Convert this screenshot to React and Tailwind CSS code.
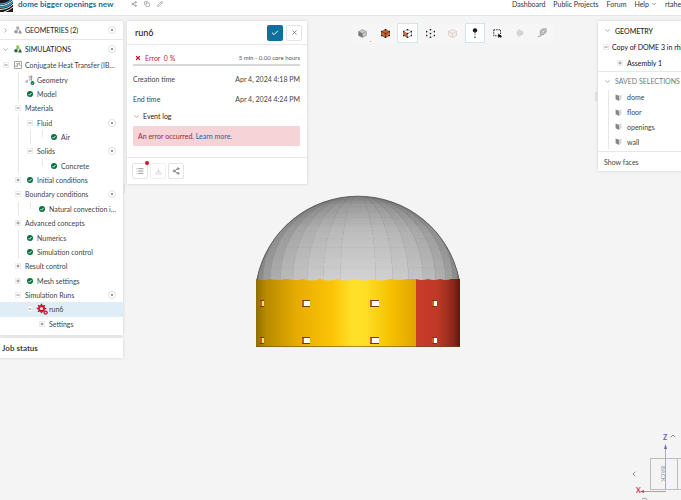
import React from "react";
import {
  Check, X, ChevronDown, ChevronRight, ChevronLeft, ChevronUp, Share2, Copy, Pencil,
  List, Download,
} from "lucide-react";

const tree = [
  { lead: "", toggle: "-", icon: "study", label: "Conjugate Heat Transfer (IB…" },
  { lead: " |", icon: "geometry", label: "Geometry" },
  { lead: " |", icon: "ok", label: "Model" },
  { lead: " ", toggle: "-", label: "Materials" },
  { lead: " |", toggle: "-", label: "Fluid", add: true },
  { lead: " ||l", icon: "ok", label: "Air" },
  { lead: " |", toggle: "-", label: "Solids", add: true },
  { lead: " | l", icon: "ok", label: "Concrete" },
  { lead: " ", toggle: "+", icon: "ok", label: "Initial conditions" },
  { lead: " ", toggle: "-", label: "Boundary conditions", add: true },
  { lead: " |l", icon: "ok", label: "Natural convection i…" },
  { lead: " ", toggle: "+", label: "Advanced concepts" },
  { lead: " |", icon: "ok", label: "Numerics" },
  { lead: " |", icon: "ok", label: "Simulation control" },
  { lead: " ", toggle: "+", label: "Result control" },
  { lead: " ", toggle: "+", icon: "ok", label: "Mesh settings" },
  { lead: " ", toggle: "-", label: "Simulation Runs", add: true },
  { lead: "  ", toggle: "-", icon: "failed", label: "run6", selected: true },
  { lead: "   ", toggle: "+", label: "Settings" },
];

function Toggle({ kind, label }) {
  return (
    <span className="flex w-3 shrink-0 justify-center">
      <button
        type="button"
        aria-label={(kind === "+" ? "Expand " : "Collapse ") + label}
        className="flex size-[6px] items-center justify-center border border-[#ececec] bg-white"
      >
        <svg viewBox="0 0 6 6" className="size-[6px] shrink-0" stroke="#8a8a8a" strokeWidth="1">
          <path d={kind === "+" ? "M1.500 3H4.500M3 1.500V4.500" : "M1.500 3H4.500"} />
        </svg>
      </button>
    </span>
  );
}

function AddButton({ label }) {
  return (
    <button
      type="button"
      aria-label={"Add to " + label}
      className="ml-auto flex size-2 shrink-0 items-center justify-center rounded-full border border-[#e2e2e2] bg-white"
    >
      <svg viewBox="0 0 6 6" className="size-[6px] shrink-0" stroke="#777" strokeWidth="1">
        <path d="M2 3H4M3 2V4" />
      </svg>
    </button>
  );
}

function Shapes({ top, base, className }) {
  return (
    <svg viewBox="0 0 16 16" className={className}>
      <path d="M4 2 9 0 11 6 6 8Z" fill={top} />
      <circle cx="4" cy="11.5" r="3.6" fill={base} />
      <path d="M8 15 12 7 16 15Z" fill={base} />
      <path d="M5 6 7 9M9 6 11 9" stroke={base} />
    </svg>
  );
}

function gearPath(cx, cy, outer, inner, teeth) {
  const pts = [];
  for (let i = 0; i < teeth; i++) {
    [[-0.3, inner], [-0.18, outer], [0.18, outer], [0.3, inner]].forEach(([o, r]) => {
      const a = ((i + o) / teeth) * Math.PI * 2;
      pts.push((cx + r * Math.cos(a)).toFixed(2) + " " + (cy + r * Math.sin(a)).toFixed(2));
    });
  }
  return "M" + pts.join("L") + "Z";
}

function TreeIcon({ kind }) {
  if (kind === "ok")
    return (
      <svg viewBox="0 0 12 12" className="size-[6px]">
        <circle cx="6" cy="6" r="6" fill="#0b7040" />
        <path d="M3 6.2 5.2 8.4 9 4" stroke="#fff" strokeWidth="1.8" fill="none" />
      </svg>
    );
  if (kind === "failed")
    return (
      <svg viewBox="0 0 12 12" className="size-3 shrink-0">
        <path d={gearPath(5.5, 5.5, 4.8, 3.5, 8)} fill="#d0112b" />
        <circle cx="5.5" cy="5.5" r="1.6" fill="#e3f0f7" />
        <circle cx="9.6" cy="9.6" r="2.2" fill="#d0112b" />
        <circle cx="9.6" cy="9.6" r="0.9" fill="#e3f0f7" />
      </svg>
    );
  if (kind === "geometry")
    return (
      <svg viewBox="0 0 12 12" className="size-[10px]">
        <path d="M4 2 8 1V5L5 7M1 7 3 6V9H1Z" fill="#ccc" stroke="#aaa" strokeWidth="0.8" />
        <path d="M8 1V7" stroke="#888" />
        <circle cx="9" cy="9.5" r="2.4" fill="#0b7040" />
        <path d="M7.8 9.5 8.8 10.4 10.3 8.6" stroke="#fff" strokeWidth="0.7" fill="none" />
      </svg>
    );
  return (
    <svg viewBox="0 0 12 12" className="size-2" fill="none" stroke="#777">
      <rect x="1" y="1" width="10" height="10" />
      <path d="M3 9V6M5 9V4H8M8 2V6L10 8M3 4H4" />
    </svg>
  );
}

function TreeRow({ row }) {
  return (
    <li className={"flex items-center pr-[7px] " + (row.selected ? "bg-[#dfeef6]" : "")}>
      {row.lead.split("").map((c, i) => (
        <span key={i} className="flex h-full w-3 shrink-0 justify-center">
          {c !== " " && (
            <span className={"w-px bg-[#e6e6e6] " + (c === "l" ? "h-1/2" : "h-full")} />
          )}
        </span>
      ))}
      {row.toggle && <Toggle kind={row.toggle} label={row.label} />}
      {row.icon && (
        <span className="flex w-3 shrink-0 items-center justify-center">
          <TreeIcon kind={row.icon} />
        </span>
      )}
      <span className="ml-px whitespace-nowrap">{row.label}</span>
      {row.add && <AddButton label={row.label} />}
    </li>
  );
}

function SectionHead({ open, label, top, base }) {
  const Icon = open ? ChevronDown : ChevronRight;
  return (
    <div className="flex h-[18px] items-center pr-[7px]">
      <button type="button" className="flex items-center gap-[3px] pl-[2px] text-[#222]">
        <Icon className="size-[7px] text-[#777]" />
        <span className="flex items-center gap-[3px] pl-[2px]">
          <Shapes top={top} base={base} className="size-2" />
          {label}
        </span>
      </button>
      <AddButton label={label} />
    </div>
  );
}

function CubeIcon({ fill, edge, dots, half }) {
  return (
    <svg viewBox="0 0 16 16" className="size-[9px]">
      <path d="M8 1 15 4.5V11.5L8 15 1 11.5V4.5Z" fill={fill} />
      {half && <path d="M1 4.5 8 8V15L1 11.5Z" fill={half} />}
      <path
        d="M8 1 15 4.5V11.5L8 15 1 11.5V4.5ZM1 4.5 8 8 15 4.5M8 8V15"
        fill="none" stroke={edge} strokeWidth="1" strokeDasharray={dots === "only" ? "1 2" : undefined}
      />
      {dots &&
        [[8, 1], [15, 4.5], [15, 11.5], [8, 15], [1, 11.5], [1, 4.5], [8, 8]].map(([x, y]) => (
          <circle key={x + "-" + y} cx={x} cy={y} r="1.5" fill="#222" />
        ))}
    </svg>
  );
}

const tools = [
  { name: "Shaded", icon: (
    <span className="relative flex">
      <CubeIcon fill="#c8c8c8" edge="#8a8a8a" half="#777" />
      <span className="absolute -right-1 -bottom-1 size-px bg-[#e8a070]" />
    </span>
  ) },
  { name: "Shaded with edges", icon: <CubeIcon fill="#d9622b" edge="#5a2a17" dots="all" /> },
  { name: "Faces", active: true, icon: <CubeIcon fill="#fff" half="#d9622b" edge="#777" dots="all" /> },
  { name: "Vertices", icon: <CubeIcon fill="none" edge="#aaa" dots="only" /> },
  { name: "Volumes", icon: <CubeIcon fill="#f7efee" edge="#d3b5b0" /> },
  { name: "Pick", active: true, icon: (
    <svg viewBox="0 0 12 14" className="h-3 w-[10px]">
      <circle cx="6" cy="4" r="2.6" fill="#111" />
      <path d="M6 5V10" stroke="#777" />
      <circle cx="6" cy="12" r="0.9" fill="#111" />
    </svg>
  ) },
  { name: "Box select", icon: (
    <svg viewBox="0 0 12 12" className="size-[9px]">
      <rect x="1" y="1" width="9" height="8" fill="none" stroke="#222" strokeWidth="1.3" strokeDasharray="1.8 1.4" />
      <path d="M7 6V12L8.6 10.6 10.6 11.8 11.8 9.6Z" fill="#111" />
    </svg>
  ) },
  { name: "Hide", icon: (
    <svg viewBox="0 0 12 12" className="size-2" fill="#e2e2e2" stroke="#c4c4c4">
      <path d="M2 3 6 1V11L2 9ZM6 4 10 3V8L6 9M1 6H11" />
    </svg>
  ) },
  { name: "Measure", icon: (
    <svg viewBox="0 0 12 12" className="size-[10px]" fill="none" stroke="#999">
      <path d="M1 10H4L6 8M4 6V3L7 1H11V5L8 8H4Z" fill="#ccc" />
      <circle cx="7.5" cy="4.5" r="1.6" fill="#eee" />
    </svg>
  ) },
];

const CX = 102;
const BASE = 85;
const latitudes = [8, 15, 22, 29, 35, 41, 47, 53, 59, 65, 70, 75, 80];
const facets = Array.from({ length: 18 }, (_, i) => -90 + i * 10);
const openings = [
  { x: 4, w: 4, lit: "#f5e27a" },
  { x: 46, w: 8, lit: "#fff" },
  { x: 114, w: 9, lit: "#fff" },
  { x: 176, w: 5, lit: "#fff" },
];

function meridian(deg) {
  const s = Math.sin((deg * Math.PI) / 180);
  return { x: CX + 101 * s, rx: Math.abs(102 * s), sweep: s < 0 ? 1 : 0 };
}

function facetFill(deg) {
  const v = Math.round(92 + 120 * Math.pow(Math.max(0, Math.cos(((deg - 1) * Math.PI) / 180)), 0.65));
  return `rgb(${v},${v},${v})`;
}

function Building() {
  return (
    <svg viewBox="0 0 204 154" className="w-[204px]" role="img" aria-label="Dome model">
      <defs>
        <linearGradient id="wall" x1="0" x2="1">
          <stop offset="0" stopColor="#8f6d00" />
          <stop offset="0.06" stopColor="#b88a00" />
          <stop offset="0.25" stopColor="#e6ab00" />
          <stop offset="0.48" stopColor="#fcc408" />
          <stop offset="0.6" stopColor="#ffe02a" />
          <stop offset="0.68" stopColor="#ffdf26" />
          <stop offset="0.85" stopColor="#f5bf00" />
          <stop offset="1" stopColor="#e0a500" />
        </linearGradient>
        <linearGradient id="red" x1="0" x2="1">
          <stop offset="0" stopColor="#c93d2a" />
          <stop offset="0.5" stopColor="#bd3926" />
          <stop offset="0.85" stopColor="#8a2719" />
          <stop offset="1" stopColor="#5f170e" />
        </linearGradient>
        <linearGradient id="crown" x1="0" x2="0" y1="0" y2="1">
          <stop offset="0" stopColor="#000" stopOpacity="0.45" />
          <stop offset="0.12" stopColor="#000" stopOpacity="0.27" />
          <stop offset="0.4" stopColor="#000" stopOpacity="0.11" />
          <stop offset="1" stopColor="#000" stopOpacity="0" />
        </linearGradient>
        <clipPath id="dome"><path d="M1 88V85A103 103 0 0 1 203 85V88Z" /></clipPath>
      </defs>
      <g clipPath="url(#dome)">
        <rect width="204" height="90" fill="#666" />
        {facets.map((d) => {
          const a = meridian(d);
          const b = meridian(d + 10);
          const fill = facetFill(d + 5);
          return (
            <path
              key={d}
              d={`M${a.x} 88V${BASE}A${a.rx} 84 0 0 ${a.sweep} ${CX} 1A${b.rx} 84 0 0 ${1 - b.sweep} ${b.x} ${BASE}V88Z`}
              fill={fill}
              stroke={fill}
              strokeWidth="0.4"
            />
          );
        })}
        <rect width="204" height="90" fill="url(#crown)" />
        {latitudes.map((l) => {
          const y = BASE - 84 * Math.sin((l * Math.PI) / 180);
          return <path key={l} d={`M0 ${y}H204`} stroke="#777" strokeWidth="0.5" opacity="0.12" />;
        })}
      </g>
      <path d="M1 85A103 103 0 0 1 203 85" fill="none" stroke="#555" strokeWidth="0.8" />
      <path
        d="M0 85Q7 87 14 85Q22 87 30 85Q39 87 47 85Q56 88 64 85Q73 88 81 85Q90 88 99 85Q108 88 117 85Q126 88 134 85Q143 87 151 85L160 85V153H0Z"
        fill="url(#wall)"
      />
      <path d="M160 85Q166 87 172 85Q178 87 184 85Q190 87 195 85L204 85V153H160Z" fill="url(#red)" />
      <path d="M0 152.5H204" stroke="#6b4a10" strokeWidth="0.8" opacity="0.7" />
      {[107, 144].map((y) =>
        openings.map((w) => (
          <g key={w.x + "-" + y}>
            <rect x={w.x} y={y - 1} width={w.w} height="7" fill="#7a3a10" />
            <rect x={w.x} y={y} width="2" height="5" fill="#d0551c" />
            <rect x={w.x + 2} y={y} width={w.w - 2} height="5" fill={w.lit} />
          </g>
        ))
      )}
    </svg>
  );
}

function ViewCube() {
  return (
    <svg viewBox="0 0 52 70" className="h-[70px] w-[52px]" fill="none" role="img" aria-label="View cube">
      <rect x="21.5" y="28.5" width="27" height="31" stroke="#bcbcc2" />
      <path d="M48 28.5H52M48 59.5H52" stroke="#bcbcc2" />
      <path d="M36.5 59V17" stroke="#a9a4dc" />
      <path d="M35 19 36.5 14 38 19Z" fill="#6a61c0" />
      <path d="M37 61.5H14" stroke="#e08a98" />
      <path d="M15 60 11 61.500 15 63Z" fill="#cf3850" />
      <path d="M13 69Q17 67 18 70" stroke="#999" />
      <text x="34" y="10" fontSize="7" fontWeight="700" fill="#6a61c0" fontFamily="Lato, sans-serif">Z</text>
      <text x="7" y="63" fontSize="7" fontWeight="700" fill="#cf3850" fontFamily="Lato, sans-serif">X</text>
      <text transform="translate(32 36) rotate(90)" fontSize="6" fill="#9a98b4" fontFamily="Lato, sans-serif">BACK</text>
    </svg>
  );
}

function FaceIcon() {
  return (
    <svg viewBox="0 0 12 12" className="size-[7px]">
      <path d="M1 1 7 3V12L1 9Z" fill="#888" />
      <path d="M7 3 11 1V9L7 12Z" fill="#d4d4d4" />
    </svg>
  );
}

const card = "bg-white shadow-[0_0_3px_rgba(0,0,0,0.15)]";

export default function App() {
  return (
    <div className="relative flex min-h-screen flex-col overflow-hidden bg-[#f4f4f4] font-[Lato,sans-serif] text-[7px] leading-[10px] text-[#444]">
      <header className="flex h-4 items-start overflow-hidden border-b border-[#e4e4e4] bg-white">
        <svg viewBox="0 0 13 12" className="h-3 w-[13px] shrink-0">
          <rect width="13" height="12" fill="#1b1b1b" />
          <path d="M0 4Q7 4 11 0M0 7.500Q9 7 13 1.500" stroke="#3d9cc4" strokeWidth="1.400" fill="none" />
          <path d="M0 5.800Q8 5.500 13 0M0 9.500Q9 9 13 4M4 12Q10 10 13 7" stroke="#fff" strokeWidth="0.900" fill="none" />
        </svg>
        <h1 className="ml-[5px] text-[8px] leading-[8px] font-bold whitespace-nowrap text-[#1f6a93]">
          dome bigger openings new
        </h1>
        <div className="ml-[18px] flex gap-[7px] pt-px text-[#777]">
          <button type="button" aria-label="Share"><Share2 className="size-[6px]" /></button>
          <button type="button" aria-label="Copy"><Copy className="size-[6px]" /></button>
          <button type="button" aria-label="Rename"><Pencil className="size-[6px]" /></button>
        </div>
        <nav className="ml-auto flex w-[169px] gap-2 leading-[8px] whitespace-nowrap text-[#333]">
          <a href="#dashboard">Dashboard</a>
          <a href="#projects">Public Projects</a>
          <a href="#forum">Forum</a>
          <a href="#help" className="flex items-center gap-[2px]">Help <ChevronDown className="size-[6px]" /></a>
          <a href="#user">rtahe</a>
        </nav>
      </header>

      <div className="absolute top-[194px] left-[256px]"><Building /></div>

      <main className="relative flex items-start pt-[5px]">
        <aside className="w-[123px] shrink-0">
          <div className={card + " pb-1"}>
            <SectionHead label="GEOMETRIES (2)" top="#aaa" base="#999" />
            <div className="border-t border-[#e8e8e8]">
              <SectionHead open label="SIMULATIONS" top="#8cc63f" base="#2b6b33" />
            </div>
            <ul className="grid h-[273px] auto-rows-fr">
              {tree.map((row) => <TreeRow key={row.label} row={row} />)}
            </ul>
          </div>
          <h2 className={card + " mt-[3px] px-[2px] py-[5px] text-[8px] font-bold"}>Job status</h2>
        </aside>

        <section className={card + " ml-1 w-[180px] shrink-0"}>
          <div className="flex h-6 items-center border-b border-[#e8e8e8] pr-[5px] pl-2">
            <h2 className="text-[9px] font-medium text-[#222]">run6</h2>
            <button type="button" aria-label="Apply" className="ml-auto flex size-4 items-center justify-center rounded-[2px] bg-[#0f6f9f] text-white">
              <Check className="size-2" strokeWidth={3} />
            </button>
            <button type="button" aria-label="Close" className="ml-[3px] flex size-4 items-center justify-center rounded-[2px] border border-[#e4e4e4]">
              <X className="size-[7px]" />
            </button>
          </div>
          <div className="pt-2 pr-[7px] pb-[11px] pl-[6px]">
            <div className="flex items-center border-b-2 border-[#d8d8d8] pb-px text-[#c01c38]">
              <X className="mx-[2px] size-[6px]" strokeWidth={5} />
              <span className="ml-[2px]">Error&nbsp; 0 %</span>
              <span className="ml-auto text-[6px] text-[#555]">5 min - 0.00 core hours</span>
            </div>
            <dl className="grid grid-cols-[auto_1fr] gap-y-[10px] pt-2">
              <dt>Creation time</dt>
              <dd className="text-right">Apr 4, 2024 4:18 PM</dd>
              <dt>End time</dt>
              <dd className="text-right">Apr 4, 2024 4:24 PM</dd>
            </dl>
            <button type="button" className="mt-[7px] flex items-center text-[#222]">
              <ChevronDown className="size-[7px] text-[#777]" />
              <span className="ml-[3px]">Event log</span>
            </button>
            <p className="mt-[5px] rounded-[1px] bg-[#f5d3d7] px-[5px] py-[5px] text-[#96283b]">
              An error occurred. <a href="#learn" className="text-[#1f5fa8]">Learn more.</a>
            </p>
          </div>
          <div className="flex h-[27px] items-center gap-[2px] border-t border-[#e8e8e8] px-[5px] text-[#666]">
            <button type="button" aria-label="Event list" className="relative flex size-4 items-center justify-center rounded-[2px] border border-[#e4e4e4]">
              <List className="size-2" />
              <span className="absolute -top-[3px] -right-[2px] size-1 rounded-full bg-[#d90f2c]" />
            </button>
            <button type="button" aria-label="Download" className="flex size-4 items-center justify-center rounded-[2px] border border-[#f0f0f0] text-[#bbb]">
              <Download className="size-[7px]" />
            </button>
            <button type="button" aria-label="Share run" className="flex size-4 items-center justify-center rounded-[2px] border border-[#e4e4e4]">
              <Share2 className="size-2" />
            </button>
          </div>
        </section>

        <div className="flex flex-1 justify-center pt-[2px]">
          <div className="grid w-[202px] grid-cols-9 bg-[#f6f6f6]">
            {tools.map((t) => (
              <button
                key={t.name}
                type="button"
                aria-label={t.name}
                className={"mx-px flex h-5 items-center justify-center " + (t.active ? "border border-[#d5e3ec] bg-white" : "")}
              >
                {t.icon}
              </button>
            ))}
          </div>
        </div>

        <aside className={card + " w-[83px] shrink-0 overflow-hidden whitespace-nowrap"}>
          <button type="button" className="flex h-[19px] items-center pl-[6px] font-medium text-[#222]">
            <ChevronDown className="size-[7px] text-[#777]" />
            <span className="ml-1">GEOMETRY</span>
          </button>
          <div className="flex h-[14px] items-center pl-[2px] text-[#111]">
            <Toggle kind="-" label="Copy of DOME 3" />
            <span>Copy of DOME 3 in rhi</span>
          </div>
          <div className="flex h-[18px] items-center border-b border-[#e8e8e8] pl-4 text-[#111]">
            <Toggle kind="+" label="Assembly 1" />
            <span className="ml-px">Assembly 1</span>
          </div>
          <button type="button" className="flex h-[18px] items-center pl-[6px] text-[#777]">
            <ChevronDown className="size-[7px]" />
            <span className="ml-1">SAVED SELECTIONS</span>
          </button>
          <ul className="ml-[10px] grid h-[59px] auto-rows-fr border-l border-[#e6e6e6]">
            {["dome", "floor", "openings", "wall"].map((name) => (
              <li key={name} className="flex items-center gap-[5px] pl-[6px]">
                <FaceIcon />
                {name}
              </li>
            ))}
          </ul>
          <button type="button" className="mt-[2px] flex h-5 w-full items-center border-t border-[#e8e8e8] pl-[6px]">
            Show faces
          </button>
        </aside>
      </main>

      <div className="absolute top-[92px] right-[83px] h-[9px] w-[3px] bg-[#dedede]" />
      <div className="absolute top-[184px] left-[123px] h-[9px] w-[2px] bg-[#dedede]" />
      <div className="absolute right-0 bottom-0 text-[#555]">
        <ChevronLeft className="absolute top-10 left-[1px] size-2" />
        <ChevronUp className="absolute top-[2px] left-[40px] size-2" />
        <ViewCube />
      </div>
    </div>
  );
}
